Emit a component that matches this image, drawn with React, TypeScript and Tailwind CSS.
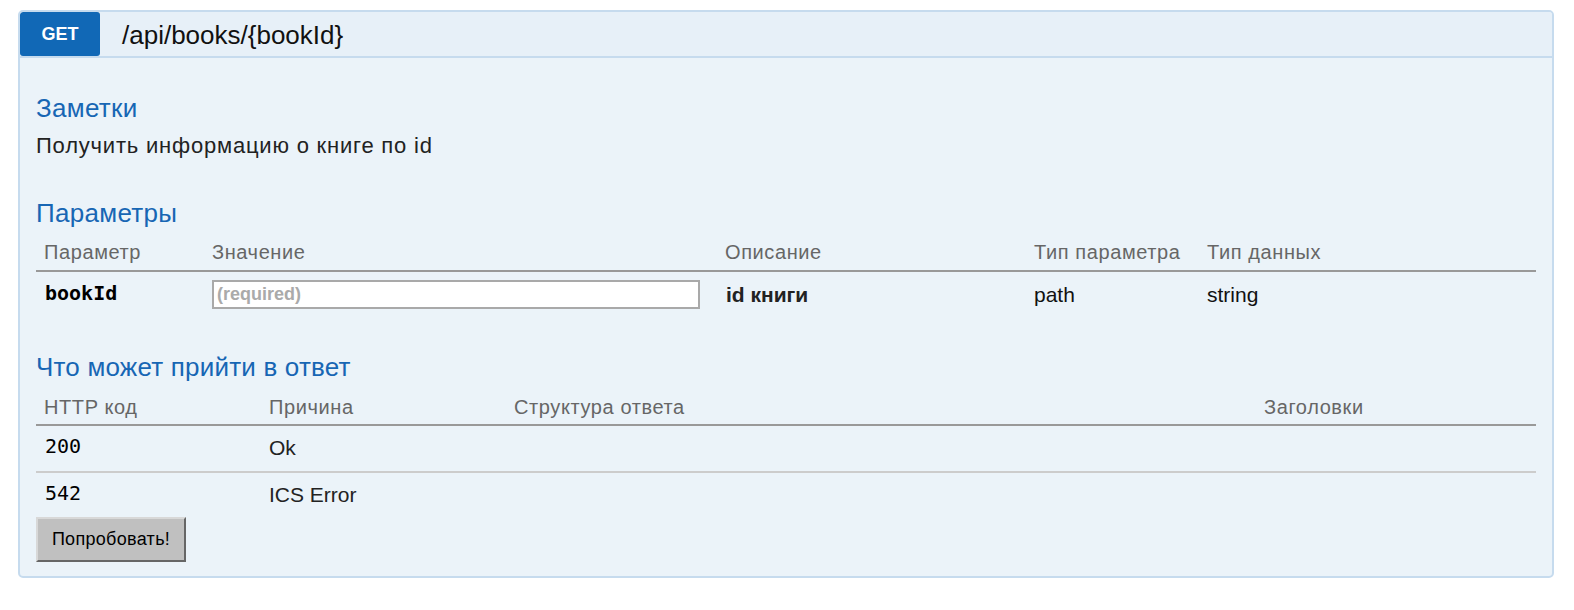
import React from "react";

const sans = { fontFamily: '"Liberation Sans", Arial, Helvetica, sans-serif' };
const mono = { fontFamily: '"DejaVu Sans Mono", Menlo, monospace' };

export default function App() {
  return (
    <div className="w-[1574px] h-[610px] bg-white pt-[10px] pl-[18px]" style={sans}>
      <div className="w-[1536px] border-2 border-[#c6dbee] rounded-[5px] bg-[#ebf3f9] overflow-hidden">
        {/* header */}
        <div className="flex items-center h-[46px] bg-[#e7f0f8] border-b-2 border-[#c6dbee]">
          <div className="w-[80px] h-[44px] bg-[#1168b6] rounded-[3px] flex items-center justify-center text-white font-bold text-[18px] leading-none">
            GET
          </div>
          <div className="ml-[22px] text-[26px] leading-[44px] pt-[1px] text-[#111]">/api/books/{"{bookId}"}</div>
        </div>

        {/* body */}
        <div className="px-[16px] pt-[35px] pb-[14px]">
          <h3 className="text-[26px] leading-[30px] tracking-[0.3px] text-[#1766b4]">Заметки</h3>
          <p className="mt-[10px] text-[22px] leading-[26px] tracking-[0.8px] text-[#222]">
            Получить информацию о книге по id
          </p>

          <h3 className="mt-[39px] text-[26px] leading-[30px] tracking-[0.3px] text-[#1766b4]">Параметры</h3>
          <div className="grid grid-cols-[168px_513px_309px_173px_1fr] border-b-2 border-[#999] text-[20px] leading-[24px] tracking-[0.6px] text-[#666] pt-[12px] pb-[6px]">
            <div className="pl-[8px]">Параметр</div>
            <div className="pl-[8px]">Значение</div>
            <div className="pl-[8px]">Описание</div>
            <div className="pl-[8px]">Тип параметра</div>
            <div className="pl-[8px]">Тип данных</div>
          </div>
          <div className="grid grid-cols-[168px_513px_309px_173px_1fr] items-center pt-[8px] text-[21px] leading-[24px] text-[#111]">
            <div className="pl-[9px] font-bold text-[20px] text-black -mt-[3px]" style={mono}>
              bookId
            </div>
            <div className="pl-[8px]">
              <input
                readOnly
                placeholder="(required)"
                className="w-[488px] h-[29px] border-2 border-[#a9a9a9] bg-white px-[3px] text-[18px] font-bold placeholder:text-[#aaa] outline-none"
                style={sans}
              />
            </div>
            <div className="pl-[9px] font-bold text-[#222]">id книги</div>
            <div className="pl-[8px]">path</div>
            <div className="pl-[8px]">string</div>
          </div>

          <h3 className="mt-[43px] text-[26px] leading-[30px] tracking-[0.2px] text-[#1766b4]">
            Что может прийти в ответ
          </h3>
          <div className="grid grid-cols-[225px_245px_750px_1fr] border-b-2 border-[#999] text-[20px] leading-[24px] tracking-[0.6px] text-[#666] pt-[13px] pb-[5px]">
            <div className="pl-[8px]">HTTP код</div>
            <div className="pl-[8px]">Причина</div>
            <div className="pl-[8px]">Структура ответа</div>
            <div className="pl-[8px]">Заголовки</div>
          </div>
          <div className="grid grid-cols-[225px_245px_750px_1fr] border-b-2 border-[#cccccc] pt-[10px] pb-[11px] text-[21px] leading-[24px] text-[#222]">
            <div className="pl-[9px] text-black text-[20px] -mt-[2px]" style={mono}>
              200
            </div>
            <div className="pl-[8px]">Ok</div>
            <div />
            <div />
          </div>
          <div className="grid grid-cols-[225px_245px_750px_1fr] pt-[10px] pb-[10px] text-[21px] leading-[24px] text-[#222]">
            <div className="pl-[9px] text-black text-[20px] -mt-[2px]" style={mono}>
              542
            </div>
            <div className="pl-[8px]">ICS Error</div>
            <div />
            <div />
          </div>
          <button
            className="w-[150px] h-[45px] bg-[#c0c0c0] border-2 border-t-[#d8d8d8] border-l-[#d8d8d8] border-r-[#666] border-b-[#666] text-[18px] tracking-[0.3px] text-black"
            style={sans}
          >
            Попробовать!
          </button>
        </div>
      </div>
    </div>
  );
}
